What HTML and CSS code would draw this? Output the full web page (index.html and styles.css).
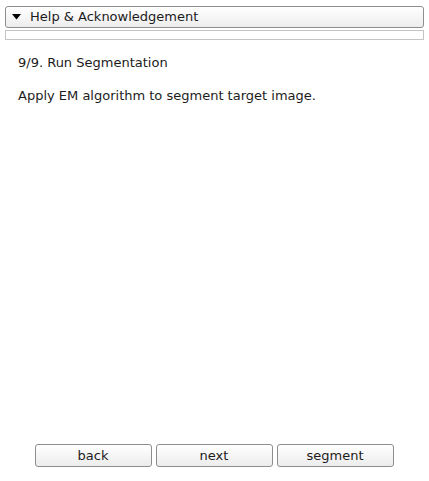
FILE: index.html
```html
<!DOCTYPE html>
<html>
<head>
<meta charset="utf-8">
<link rel="stylesheet" href="styles.css">
</head>
<body>
<div class="page">
  <div class="collapsible">
    <svg class="arrow" width="9" height="6" viewBox="0 0 9 6"><path d="M0 0 H9 L4.5 5.5 Z" fill="#000"/></svg>
    <span class="title">Help &amp; Acknowledgement</span>
  </div>
  <div class="progress"></div>
  <div class="content">
    <p class="step">9/9. Run Segmentation</p>
    <p class="desc">Apply EM algorithm to segment target image.</p>
  </div>
  <div class="buttons">
    <button class="btn">back</button>
    <button class="btn">next</button>
    <button class="btn">segment</button>
  </div>
</div>
</body>
</html>
```
FILE: styles.css
```css
html, body {
  margin: 0;
  padding: 0;
  background: #ffffff;
}
body {
  font-family: "DejaVu Sans", sans-serif;
  font-size: 13px;
  color: #1c1c1c;
}
.page {
  height: 481px;
  display: flex;
  flex-direction: column;
  box-sizing: border-box;
  padding: 6px 5px 14px 5px;
}
.collapsible {
  height: 22px;
  box-sizing: border-box;
  border: 1px solid #8e8e8e;
  border-radius: 3px;
  background: linear-gradient(#ffffff, #ededed);
  display: flex;
  align-items: center;
  padding-left: 6px;
}
.arrow {
  margin-right: 9px;
}
.title {
  line-height: 20px;
}
.progress {
  margin-top: 2px;
  height: 10px;
  box-sizing: border-box;
  border: 1px solid #c4c4c4;
}
.content {
  flex: 1;
  padding-left: 13px;
}
.content p {
  margin: 0;
  line-height: 16px;
}
.step {
  margin-top: 15px !important;
}
.desc {
  margin-top: 17px !important;
}
.buttons {
  display: flex;
  justify-content: center;
  gap: 4px;
  padding-right: 1px;
}
.btn {
  width: 117px;
  height: 23px;
  box-sizing: border-box;
  border: 1px solid #8e8e8e;
  border-radius: 3px;
  background: linear-gradient(#ffffff, #ececec);
  font-family: "DejaVu Sans", sans-serif;
  font-size: 13px;
  color: #1c1c1c;
  padding: 0;
  margin: 0;
}
```
